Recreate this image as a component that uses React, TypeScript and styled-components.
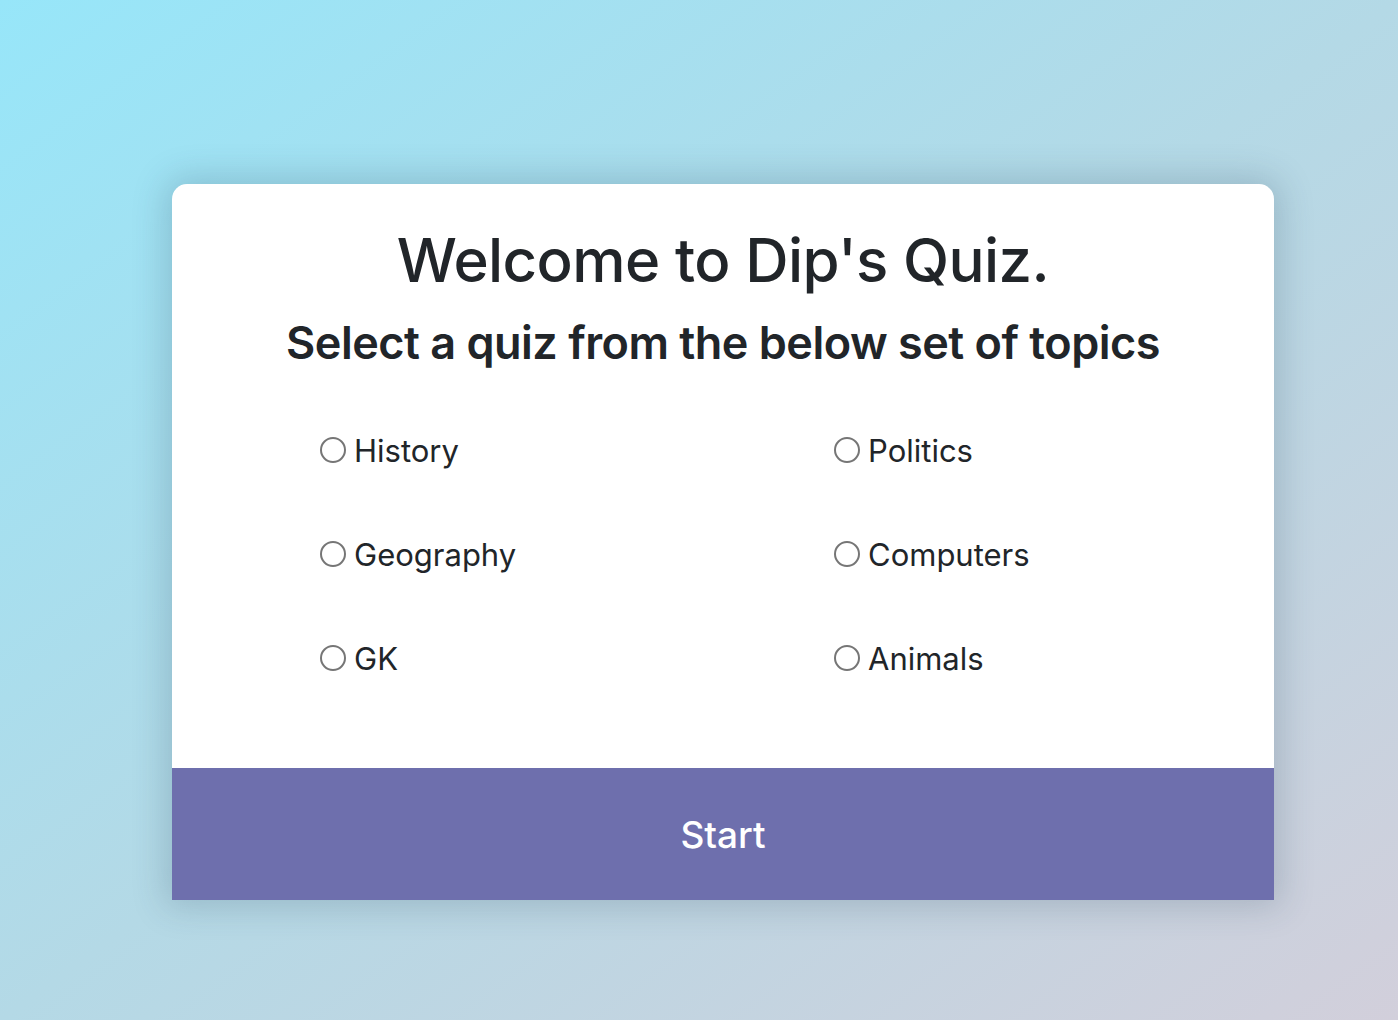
import React, { useState } from 'react';
import styled, { createGlobalStyle } from 'styled-components';

const GlobalStyle = createGlobalStyle`
   html, body {
      margin: 0;
      padding: 0;
   }
   body {
      font-family: Inter, "Noto Sans", "Liberation Sans", sans-serif;
      color: #212529;
   }
`;

const Page = styled.div`
   box-sizing: border-box;
   min-height: 1020px;
   display: flex;
   justify-content: center;
   align-items: flex-start;
   padding: 184px 0 0 48px;
   background: linear-gradient(to bottom right, #97e6f9 0%, #b4d9e6 50%, #d2cfdb 100%);
`;

const Card = styled.div`
   width: 1102px;
   background: #fff;
   border-radius: 15px 15px 0 0;
   box-shadow: 0 0 34px 6px rgba(40, 70, 90, 0.22);
   overflow: hidden;
   display: flex;
   flex-direction: column;
`;

const Header = styled.div`
   padding-top: 39px;
   text-align: center;
`;

const Title = styled.h1`
   margin: 0;
   font-size: 60px;
   line-height: 75px;
   font-weight: 500;
   letter-spacing: -0.6px;
`;

const Subtitle = styled.h2`
   margin: 17px 0 0;
   font-size: 45px;
   line-height: 55px;
   font-weight: 600;
   letter-spacing: -0.5px;
`;

const Topics = styled.div`
   display: grid;
   grid-template-columns: 514px 1fr;
   grid-auto-rows: 104px;
   padding: 28px 0 58px 148px;
`;

const Option = styled.label`
   display: flex;
   align-items: center;
   gap: 8px;
   font-size: 31px;
   cursor: pointer;
`;

const Radio = styled.input`
   appearance: none;
   margin: 0;
   width: 26px;
   height: 26px;
   border: 2px solid #767676;
   border-radius: 50%;
   background: #fff;
   cursor: pointer;

   &:checked {
      border-color: #6e6fad;
      background: radial-gradient(circle, #6e6fad 0 6px, #fff 7px);
   }
`;

const StartButton = styled.button`
   height: 132px;
   border: none;
   background: #6e6fad;
   color: #fff;
   font-family: inherit;
   font-size: 37px;
   font-weight: 500;
   cursor: pointer;
`;

const topics = ['History', 'Politics', 'Geography', 'Computers', 'GK', 'Animals'];

export default function App() {
   const [selected, setSelected] = useState('');

   return (
      <>
         <GlobalStyle />
         <Page>
            <Card>
               <Header>
                  <Title>Welcome to Dip's Quiz.</Title>
                  <Subtitle>Select a quiz from the below set of topics</Subtitle>
               </Header>
               <Topics>
                  {topics.map(topic => (
                     <Option key={topic}>
                        <Radio
                           type="radio"
                           name="topic"
                           value={topic}
                           checked={selected === topic}
                           onChange={() => setSelected(topic)}
                        />
                        {topic}
                     </Option>
                  ))}
               </Topics>
               <StartButton>Start</StartButton>
            </Card>
         </Page>
      </>
   );
}
